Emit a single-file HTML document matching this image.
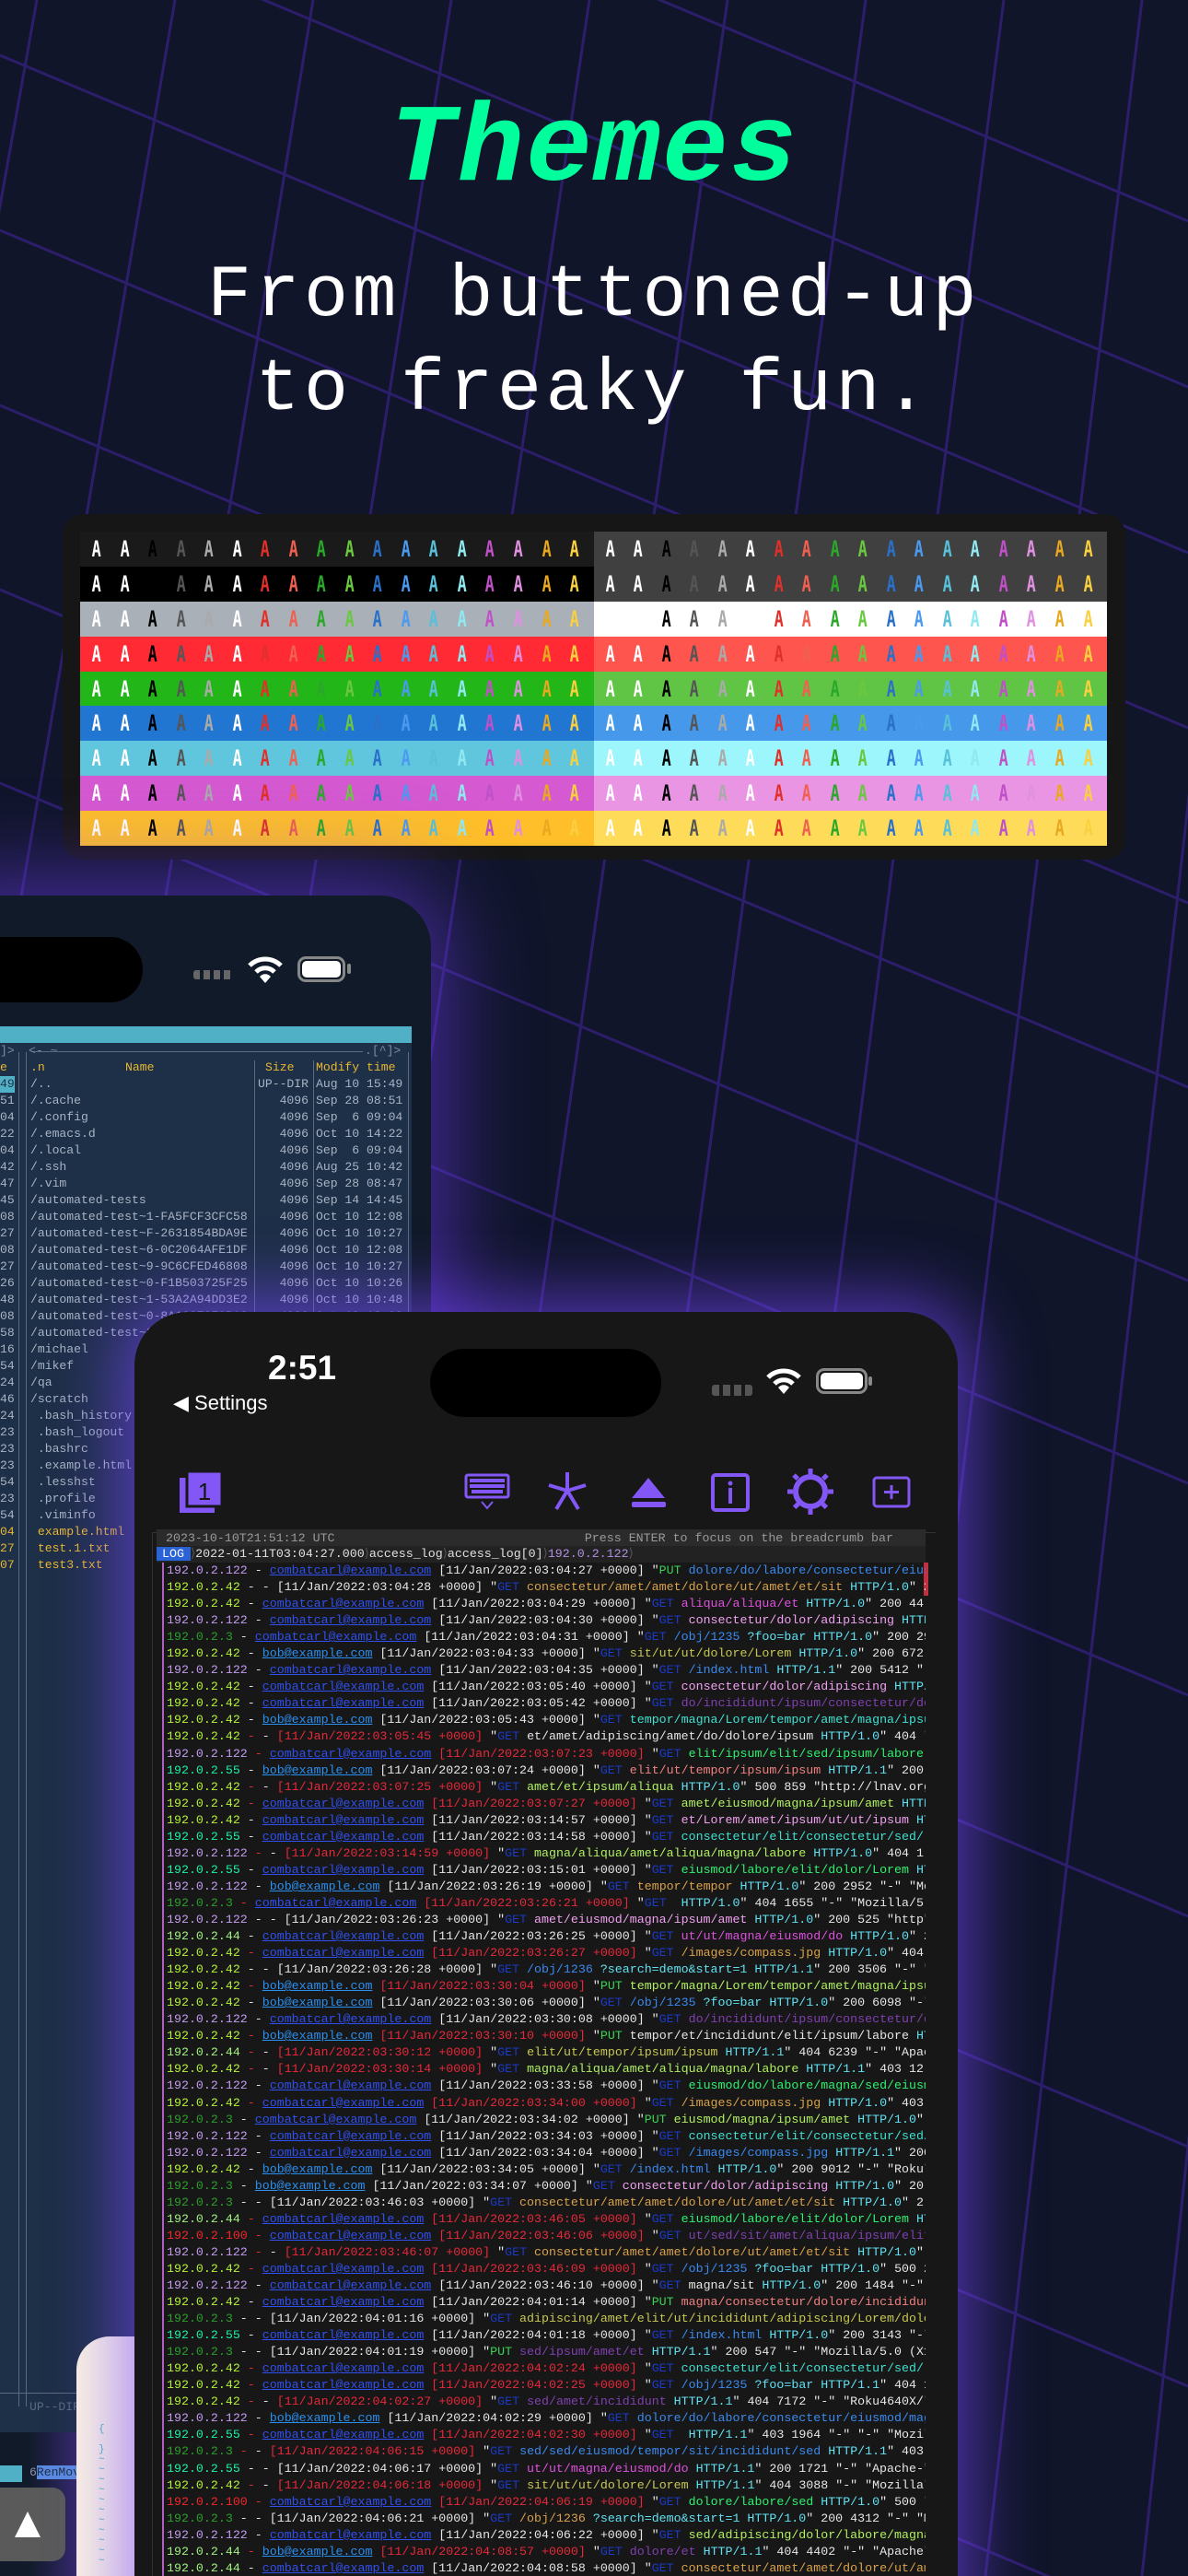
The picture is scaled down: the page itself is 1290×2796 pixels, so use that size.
<!DOCTYPE html>
<html><head><meta charset="utf-8">
<style>
*{margin:0;padding:0;box-sizing:border-box}
html,body{width:1290px;height:2796px;overflow:hidden;background:#10152a}
body{position:relative;font-family:"Liberation Mono",monospace}
#bg{position:absolute;left:0;top:0}
.title{position:absolute;left:0;width:1290px;top:96px;text-align:center;color:#00ff9c;font:italic bold 120px "Liberation Mono",monospace;letter-spacing:2px}
.sub{position:absolute;left:0;width:1290px;text-align:center;color:#fff;font:80px "Liberation Mono",monospace;letter-spacing:4.5px}
.card{position:absolute;left:68px;top:558px;width:1154px;height:375px;background:#161616;border-radius:22px}
.grid{position:absolute;left:87px;top:577px;width:1115px}
.row{height:37.9px;display:flex}
.half{width:557.5px;display:flex;align-items:center;padding-left:8px}
.half span{width:30.9px;display:inline-block;font:bold 24px "DejaVu Sans Mono",monospace;transform:scaleX(.7);text-align:left}
.back{position:absolute;left:-60px;top:972px;width:528px;height:1900px;background:#101a28;border-radius:0 56px 0 0;box-shadow:0 0 90px 20px rgba(110,60,240,.55)}
.mc{position:absolute;left:0;top:1114px;width:447px;height:1526px;background:#1e2f48;overflow:hidden;font:13.1px/18px "Liberation Mono",monospace;color:#a8b4c4;white-space:pre}
.mc .l{position:absolute}
.y{color:#e8b830}
.front{position:absolute;left:146px;top:1424px;width:894px;height:1450px;background:#171717;border-radius:58px 58px 0 0;box-shadow:0 0 70px 18px rgba(120,70,255,.6)}
.log{position:absolute;left:176px;top:1696px;width:829px;height:1100px;overflow:hidden;font:13.3px/18.05px "Liberation Mono",monospace;color:#e6e6e6;white-space:pre;border-left:2px solid #b060c0;padding-left:3px}
.p1{color:#c39bef}.p2{color:#b5f23a}.p3{color:#2c9e2c}.p5{color:#1ef0a0}.p4{color:#a0f080}.p0{color:#f02828}
.e{color:#3050f0;text-decoration:underline}.b{color:#2a90f0;text-decoration:underline}.r{color:#e8283a}.g{color:#1a3ac8}.u{color:#39d353}.h{color:#60e0f0}
.c1{color:#d9a24a}.c2{color:#e050e0}.c3{color:#f0a0f0}.c4{color:#3a8af0}.c5{color:#c8c850}.c6{color:#8040b0}.c7{color:#30f070}.c8{color:#40e0d0}.c9{color:#f08080}.c0{color:#b0f060}
</style></head><body>
<svg id="bg" width="1290" height="2796" viewBox="0 0 1290 2796">
<g stroke="#2c1e6a" stroke-width="3" fill="none">
<line x1="-100" y1="0" x2="-600" y2="2796"/>
<line x1="40" y1="0" x2="-460" y2="2796"/>
<line x1="190" y1="0" x2="-290" y2="2796"/>
<line x1="340" y1="0" x2="-120" y2="2796"/>
<line x1="490" y1="0" x2="50" y2="2796"/>
<line x1="640" y1="0" x2="220" y2="2796"/>
<line x1="790" y1="0" x2="390" y2="2796"/>
<line x1="940" y1="0" x2="560" y2="2796"/>
<line x1="1090" y1="0" x2="730" y2="2796"/>
<line x1="1240" y1="0" x2="900" y2="2796"/>
<line x1="1390" y1="0" x2="1070" y2="2796"/>
<line x1="1540" y1="0" x2="1240" y2="2796"/>
<line x1="1690" y1="0" x2="1410" y2="2796"/>
<line x1="1840" y1="0" x2="1580" y2="2796"/>
<line x1="0" y1="-300" x2="1290" y2="240"/>
<line x1="0" y1="-120" x2="1290" y2="420"/>
<line x1="0" y1="60" x2="1290" y2="600"/>
<line x1="0" y1="250" x2="1290" y2="790"/>
<line x1="0" y1="440" x2="1290" y2="980"/>
<line x1="0" y1="640" x2="1290" y2="1180"/>
<line x1="0" y1="850" x2="1290" y2="1390"/>
<line x1="0" y1="1070" x2="1290" y2="1610"/>
<line x1="0" y1="1300" x2="1290" y2="1840"/>
<line x1="0" y1="1540" x2="1290" y2="2080"/>
<line x1="0" y1="1790" x2="1290" y2="2330"/>
<line x1="0" y1="2050" x2="1290" y2="2590"/>
<line x1="0" y1="2320" x2="1290" y2="2860"/>
</g></svg>

<div class="title">Themes</div>
<div class="sub" style="top:276px">From buttoned-up</div>
<div class="sub" style="top:378px">to freaky fun.</div>

<div class="card"></div>
<div class="grid" id="grid"></div>

<div class="back"></div>
<div style="position:absolute;left:-40px;top:1017px;width:195px;height:71px;background:#000;border-radius:36px"></div>
<div style="position:absolute;left:210px;top:1053px;width:42px;height:10px;background:repeating-linear-gradient(90deg,#666 0 7px,transparent 7px 11px);border-radius:3px"></div>
<svg style="position:absolute;left:268px;top:1036px" width="40" height="32" viewBox="0 0 40 32"><path d="M3 12 A24 24 0 0 1 37 12" stroke="#fff" stroke-width="5" fill="none"/><path d="M10 19 A14 14 0 0 1 30 19" stroke="#fff" stroke-width="5" fill="none"/><path d="M20 31 L14 24 A8 8 0 0 1 26 24 Z" fill="#fff"/></svg>
<div style="position:absolute;left:323px;top:1038px;width:52px;height:28px;border:3px solid #888;border-radius:9px;padding:2px"><div style="width:100%;height:100%;background:#fff;border-radius:5px"></div></div>
<div style="position:absolute;left:377px;top:1046px;width:4px;height:11px;background:#888;border-radius:2px"></div>

<div class="mc" id="mc">
<div style="position:absolute;left:0;top:0;width:447px;height:18px;background:#4fb0c6"></div>
<div style="position:absolute;left:20px;top:28px;width:1px;height:1470px;background:#5a6a80"></div>
<div style="position:absolute;left:28px;top:28px;width:1px;height:1470px;background:#5a6a80"></div>
<div style="position:absolute;left:276px;top:37px;width:1px;height:1460px;background:#5a6a80"></div>
<div style="position:absolute;left:340px;top:37px;width:1px;height:1460px;background:#5a6a80"></div>
<div style="position:absolute;left:443px;top:28px;width:1px;height:1470px;background:#5a6a80"></div>
<div style="position:absolute;left:34px;top:27px;width:360px;height:1px;background:#5a6a80"></div>
<div class="l" style="left:0;top:18px;color:#7a8aa0">]&gt;</div><div class="l" style="left:31px;top:18px;color:#7a8aa0">&lt;- ~</div><div class="l" style="left:396px;top:18px;color:#7a8aa0">.[^]&gt;</div>
<div class="l y" style="left:0;top:36px">e</div>
<div class="l y" style="left:33px;top:36px">.n</div><div class="l y" style="left:136px;top:36px">Name</div><div class="l y" style="left:288px;top:36px">Size</div><div class="l y" style="left:343px;top:36px">Modify time</div>
<div class="l" id="mcrows" style="left:0;top:54px"></div>
<div style="position:absolute;left:0;top:1483px;width:447px;height:1px;background:#5a6a80"></div>
<div class="l" style="left:32px;top:1490px;color:#5a6a80">UP--DIR</div>
</div>
<div style="position:absolute;left:0;top:2640px;width:146px;height:160px;background:linear-gradient(90deg,#101a28 20%,#5a38b0 100%)"></div>
<div style="position:absolute;left:0;top:2676px;width:24px;height:18px;background:#4fb0c6"></div>
<div style="position:absolute;left:32px;top:2675px;font:13.1px/18px 'Liberation Mono',monospace;color:#8a96a8">6<span style="background:#5a8ae0;color:#1e2f48">RenMov</span></div>
<div style="position:absolute;left:-14px;top:2700px;width:85px;height:80px;background:#5a5a5a;border-radius:14px"></div>
<div style="position:absolute;left:16px;top:2726px;width:0;height:0;border-left:14px solid transparent;border-right:14px solid transparent;border-bottom:28px solid #fff"></div>
<div style="position:absolute;left:83px;top:2536px;width:80px;height:270px;background:#fcf5e3;border-radius:36px 0 0 0"></div>
<div style="position:absolute;left:107px;top:2632px;font:11px/11px 'Liberation Mono',monospace;color:#40c0c0;white-space:pre">{

}
~
~
~
~
~
~
~
~
~
~
~</div>

<div class="front"></div>
<div style="position:absolute;left:165px;top:1663px;width:1px;height:1140px;background:#333"></div>
<div style="position:absolute;left:291px;top:1464px;color:#fff;font:bold 37px 'Liberation Sans Narrow','Liberation Sans',sans-serif">2:51</div>
<div style="position:absolute;left:188px;top:1510px;color:#fff;font:22px 'Liberation Sans Narrow','Liberation Sans',sans-serif">&#9664; Settings</div>
<div style="position:absolute;left:467px;top:1464px;width:251px;height:74px;background:#000;border-radius:37px"></div>
<div style="position:absolute;left:773px;top:1503px;width:44px;height:12px;background:repeating-linear-gradient(90deg,#555 0 8px,transparent 8px 12px);border-radius:3px"></div>
<svg style="position:absolute;left:831px;top:1484px" width="40" height="30" viewBox="0 0 40 30"><path d="M3 11 A24 24 0 0 1 37 11" stroke="#fff" stroke-width="5" fill="none"/><path d="M10 18 A14 14 0 0 1 30 18" stroke="#fff" stroke-width="5" fill="none"/><path d="M20 29 L14 22 A8 8 0 0 1 26 22 Z" fill="#fff"/></svg>
<div style="position:absolute;left:886px;top:1485px;width:56px;height:28px;border:3px solid #888;border-radius:9px;padding:2px"><div style="width:100%;height:100%;background:#fff;border-radius:5px"></div></div>
<div style="position:absolute;left:943px;top:1494px;width:4px;height:10px;background:#888;border-radius:2px"></div>

<svg style="position:absolute;left:146px;top:1590px" width="894" height="60" viewBox="146 1590 894 60">
<g fill="#8257f5" stroke="#8257f5">
<rect x="195" y="1604" width="38" height="38" stroke="none"/>
<rect x="203" y="1597" width="38" height="38" stroke="#171717" stroke-width="3"/>
<text x="222" y="1628" font-family="Liberation Sans" font-size="26" fill="#171717" stroke="none" text-anchor="middle">1</text>
<rect x="506" y="1601" width="46" height="24" rx="2" fill="none" stroke-width="3"/>
<g stroke="none"><rect x="510" y="1605" width="38" height="4"/><rect x="510" y="1611" width="38" height="4"/><rect x="512" y="1617" width="34" height="4"/></g>
<path d="M523 1630 L529 1637 L535 1630" fill="none" stroke-width="2"/>
<path d="M616 1598 V1618 M616 1618 L596 1612 M616 1618 L636 1612 M616 1618 L604 1638 M616 1618 L628 1638" fill="none" stroke-width="4"/>
<path d="M704 1604 L722 1626 L686 1626 Z" stroke="none"/><rect x="686" y="1630" width="37" height="6" rx="2" stroke="none"/>
<rect x="774" y="1601" width="38" height="38" rx="3" fill="none" stroke-width="4"/>
<circle cx="793" cy="1610" r="2.5" stroke="none"/><rect x="791" y="1615" width="4" height="17" stroke="none"/>
<circle cx="880" cy="1619" r="16" fill="none" stroke-width="6"/>
<path d="M880 1594V1644M855 1619H905M862 1601L898 1637M898 1601L862 1637" fill="none" stroke-width="5" stroke-dasharray="6 38" />
<rect x="949" y="1604" width="38" height="31" rx="3" fill="none" stroke-width="3"/>
<path d="M968 1612V1627M960 1619.5H976" stroke-width="3"/>
</g></svg>
<div style="position:absolute;left:166px;top:1663px;width:850px;height:1px;background:#333"></div>
<div style="position:absolute;left:170px;top:1660px;width:835px;height:19px;background:#2b2b2b;font:13.3px/19px 'Liberation Mono',monospace;color:#9a9a9a;white-space:pre;padding-left:10px">2023-10-10T21:51:12 UTC                                  Press ENTER to focus on the breadcrumb bar</div>
<div style="position:absolute;left:170px;top:1678px;width:835px;height:18px;background:#222;font:13.3px/18px 'Liberation Mono',monospace;color:#e0e0e0;white-space:pre"><span style="background:#2a62d8;color:#fff;padding:0 7px 0 6px">LOG</span><span style="color:#555">&#10217;</span>2022-01-11T03:04:27.000<span style="color:#555">&#10217;</span>access_log<span style="color:#555">&#10217;</span>access_log[0]<span style="color:#555">&#10217;</span><span style="color:#b090e0">192.0.2.122</span><span style="color:#555">&#10217;</span></div>
<div style="position:absolute;left:1003px;top:1696px;width:5px;height:36px;background:#c03040"></div>
<div class="log" id="log"></div>

<script>
var C=[['#fff','#fff','#000','#555','#aaa','#fff','#e0302a','#f06050','#2aa82a','#6ac840','#2a70c8','#4a9af0','#58c0d8','#90e8f0','#c050c8','#e090e0','#e8a820','#f8d040']];
var rows=[['#1a1a1a','#404040'],['#000','#404040'],['#a9b0b8','#ffffff'],['#ff2a33','#fe554e'],['#22b618','#60c445'],['#2176d2','#4698ea'],['#60c6de','#9cf6fc'],['#d559d0','#e995e3'],['#febf2a','#fedc5a']];
var g='';rows.forEach(function(r){g+='<div class="row">';r.forEach(function(bg){g+='<div class="half" style="background:'+bg+'">';C[0].forEach(function(c){g+='<span style="color:'+c+'">A</span>'});g+='</div>'});g+='</div>'});
document.getElementById('grid').innerHTML=g;
var nums=['49','51','04','22','04','42','47','45','08','27','08','27','26','48','08','58','16','54','24','46','24','23','23','23','54','23','54','04','27','07'];
var names=['/..','/.cache','/.config','/.emacs.d','/.local','/.ssh','/.vim','/automated-tests','/automated-test~1-FA5FCF3CFC58','/automated-test~F-2631854BDA9E','/automated-test~6-0C2064AFE1DF','/automated-test~9-9C6CFED46808','/automated-test~0-F1B503725F25','/automated-test~1-53A2A94DD3E2','/automated-test~0-8A1C2E9F0B12','/automated-test~2-44E1A7B2C9D0','/michael','/mikef','/qa','/scratch',' .bash_history',' .bash_logout',' .bashrc',' .example.html',' .lesshst',' .profile',' .viminfo',' example.html',' test.1.txt',' test3.txt'];
var sz=['UP--DIR','   4096','   4096','   4096','   4096','   4096','   4096','   4096','   4096','   4096','   4096','   4096','   4096','   4096','   4096','   4096'];
var tm=['Aug 10 15:49','Sep 28 08:51','Sep  6 09:04','Oct 10 14:22','Sep  6 09:04','Aug 25 10:42','Sep 28 08:47','Sep 14 14:45','Oct 10 12:08','Oct 10 10:27','Oct 10 12:08','Oct 10 10:27','Oct 10 10:26','Oct 10 10:48','Oct 10 12:08','Oct 10 10:58'];
var m='';for(var i=0;i<30;i++){var y=i*18;var yc=i>=27?' y':'';
m+='<div class="l'+yc+'" style="left:0;top:'+y+'px'+(i==0?';background:#4fb0c6;color:#1e2f48':'')+'">'+nums[i]+'</div>';
m+='<div class="l'+yc+'" style="left:33px;top:'+y+'px">'+names[i]+'</div>';
if(i<16){m+='<div class="l" style="left:280px;top:'+y+'px">'+sz[i]+'</div><div class="l" style="left:343px;top:'+y+'px">'+tm[i]+'</div>';}}
document.getElementById('mcrows').innerHTML=m;
var ips={'122':'p1','42':'p2','3':'p3','55':'p5','44':'p4','100':'p0'};
var L=[
['122','e',0,'03:04:27','u','c4','dolore/do/labore/consectetur/eiusmod','HTTP/1.0','200 2952'],
['42','-',0,'03:04:28','g','c1','consectetur/amet/amet/dolore/ut/amet/et/sit','HTTP/1.0','200 44'],
['42','e',0,'03:04:29','g','c2','aliqua/aliqua/et','HTTP/1.0','200 44'],
['122','e',0,'03:04:30','g','c3','consectetur/dolor/adipiscing','HTTP/1.0','200 4'],
['3','e',0,'03:04:31','g','c4','/obj/1235','?foo=bar HTTP/1.0','200 29'],
['42','b',0,'03:04:33','g','c5','sit/ut/ut/dolore/Lorem','HTTP/1.0','200 672'],
['122','e',0,'03:04:35','g','c4','/index.html','HTTP/1.1','200 5412'],
['42','e',0,'03:05:40','g','c3','consectetur/dolor/adipiscing','HTTP/1.0','200'],
['42','e',0,'03:05:42','g','c6','do/incididunt/ipsum/consectetur/dolor','HTTP/1.0','200'],
['42','b',0,'03:05:43','g','c8','tempor/magna/Lorem/tempor/amet/magna/ipsum','HTTP/1.0','200'],
['42','-',1,'03:05:45','g','w','et/amet/adipiscing/amet/do/dolore/ipsum','HTTP/1.0','404'],
['122','e',1,'03:07:23','g','c7','elit/ipsum/elit/sed/ipsum/labore','HTTP/1.0','200'],
['55','b',0,'03:07:24','g','c9','elit/ut/tempor/ipsum/ipsum','HTTP/1.1','200 1655'],
['42','-',1,'03:07:25','g','c0','amet/et/ipsum/aliqua','HTTP/1.0','500 859 "http://lnav.org"'],
['42','e',1,'03:07:27','g','c0','amet/eiusmod/magna/ipsum/amet','HTTP/1.0','200'],
['42','e',0,'03:14:57','g','c3','et/Lorem/amet/ipsum/ut/ut/ipsum','HTTP/1.0','200'],
['55','e',0,'03:14:58','g','c8','consectetur/elit/consectetur/sed/','HTTP/1.0','200'],
['122','-',1,'03:14:59','g','c0','magna/aliqua/amet/aliqua/magna/labore','HTTP/1.0','404 1'],
['55','e',0,'03:15:01','g','c7','eiusmod/labore/elit/dolor/Lorem','HTTP/1.0','200'],
['122','b',0,'03:26:19','g','c1','tempor/tempor','HTTP/1.0','200 2952 "-" "Mozilla"'],
['3','e',1,'03:26:21','g','c9','','HTTP/1.0','404 1655'],
['122','-',0,'03:26:23','g','c3','amet/eiusmod/magna/ipsum/amet','HTTP/1.0','200 525 "http"'],
['44','e',0,'03:26:25','g','c2','ut/ut/magna/eiusmod/do','HTTP/1.0','200'],
['42','e',1,'03:26:27','g','c1','/images/compass.jpg','HTTP/1.0','404'],
['42','-',0,'03:26:28','g','c4','/obj/1236','?search=demo&start=1 HTTP/1.1','200 3506 "-"'],
['42','b',1,'03:30:04','u','c0','tempor/magna/Lorem/tempor/amet/magna/ipsum','HTTP/1.0','200'],
['42','b',0,'03:30:06','g','c4','/obj/1235','?foo=bar HTTP/1.0','200 6098 "-"'],
['122','e',0,'03:30:08','g','c6','do/incididunt/ipsum/consectetur/dolor','HTTP/1.0','200'],
['42','b',1,'03:30:10','u','w','tempor/et/incididunt/elit/ipsum/labore','HTTP/1.0','200'],
['44','-',1,'03:30:12','g','c5','elit/ut/tempor/ipsum/ipsum','HTTP/1.1','404 6239 "-" "Apache"'],
['42','-',1,'03:30:14','g','c0','magna/aliqua/amet/aliqua/magna/labore','HTTP/1.1','403 12'],
['122','e',0,'03:33:58','g','c7','eiusmod/do/labore/magna/sed/eiusmod','HTTP/1.0','200'],
['42','e',1,'03:34:00','g','c1','/images/compass.jpg','HTTP/1.0','403'],
['3','e',0,'03:34:02','u','c0','eiusmod/magna/ipsum/amet','HTTP/1.0','200'],
['122','e',0,'03:34:03','g','c8','consectetur/elit/consectetur/sed/','HTTP/1.0','200'],
['122','e',0,'03:34:04','g','c4','/images/compass.jpg','HTTP/1.1','200 2198 "-" "Roku4640X/"'],
['42','b',0,'03:34:05','g','c4','/index.html','HTTP/1.0','200 9012 "-" "Roku"'],
['3','b',0,'03:34:07','g','c3','consectetur/dolor/adipiscing','HTTP/1.0','20'],
['3','-',0,'03:46:03','g','c1','consectetur/amet/amet/dolore/ut/amet/et/sit','HTTP/1.0','2'],
['44','e',1,'03:46:05','g','c7','eiusmod/labore/elit/dolor/Lorem','HTTP/1.0','200'],
['100','e',1,'03:46:06','g','c6','ut/sed/sit/amet/aliqua/ipsum/elit','HTTP/1.0','200'],
['122','-',1,'03:46:07','g','c1','consectetur/amet/amet/dolore/ut/amet/et/sit','HTTP/1.0','200'],
['42','e',1,'03:46:09','g','c4','/obj/1235','?foo=bar HTTP/1.0','500 2'],
['122','e',0,'03:46:10','g','w','magna/sit','HTTP/1.0','200 1484 "-"'],
['42','e',0,'04:01:14','u','c9','magna/consectetur/dolore/incididunt','HTTP/1.0','200'],
['3','-',0,'04:01:16','g','c5','adipiscing/amet/elit/ut/incididunt/adipiscing/Lorem/dolor','HTTP/1.0','200'],
['55','e',0,'04:01:18','g','c4','/index.html','HTTP/1.0','200 3143 "-"'],
['3','-',0,'04:01:19','u','c6','sed/ipsum/amet/et','HTTP/1.1','200 547 "-" "Mozilla/5.0 (X11)"'],
['42','e',1,'04:02:24','g','c8','consectetur/elit/consectetur/sed/','HTTP/1.0','200'],
['42','e',1,'04:02:25','g','c4','/obj/1235','?foo=bar HTTP/1.1','404 1'],
['42','-',1,'04:02:27','g','c6','sed/amet/incididunt','HTTP/1.1','404 7172 "-" "Roku4640X/"'],
['122','b',0,'04:02:29','g','c4','dolore/do/labore/consectetur/eiusmod/magna','HTTP/1.0','200'],
['55','e',1,'04:02:30','g','c6','','HTTP/1.1','403 1964 "-"'],
['3','-',1,'04:06:15','g','c4','sed/sed/eiusmod/tempor/sit/incididunt/sed','HTTP/1.1','403'],
['55','-',0,'04:06:17','g','c2','ut/ut/magna/eiusmod/do','HTTP/1.1','200 1721 "-" "Apache-"'],
['42','-',1,'04:06:18','g','c5','sit/ut/ut/dolore/Lorem','HTTP/1.1','404 3088 "-" "Mozilla"'],
['100','e',1,'04:06:19','g','c7','dolore/labore/sed','HTTP/1.0','500'],
['3','-',0,'04:06:21','g','c1','/obj/1236','?search=demo&start=1 HTTP/1.0','200 4312 "-" "M"'],
['122','e',0,'04:06:22','g','c0','sed/adipiscing/dolor/labore/magna','HTTP/1.0','200'],
['44','b',1,'04:08:57','g','c6','dolore/et','HTTP/1.1','404 4402 "-" "Apache"'],
['44','e',0,'04:08:58','g','c1','consectetur/amet/amet/dolore/ut/amet','HTTP/1.0','200']
];
var o='';L.forEach(function(l){
var ip='192.0.2.'+l[0];var dash=l[2]?'<span class="r"> - </span>':' - ';
var who=l[1]=='-'?'- ':(l[1]=='e'?'<span class="e">combatcarl@example.com</span> ':'<span class="b">bob@example.com</span> ');
var dt='[11/Jan/2022:'+l[3]+' +0000]';dt=l[2]?'<span class="r">'+dt+'</span>':dt;
var meth=l[4]=='u'?'<span class="u">PUT</span>':'<span class="g">GET</span>';
o+='<span class="'+ips[l[0]]+'">'+ip+'</span>'+dash+who+dt+' "'+meth+' <span class="'+l[5]+'">'+l[6]+'</span> <span class="h">'+l[7]+'</span>" '+l[8]+' "-" "Mozilla/5.0"\n';});
document.getElementById('log').innerHTML=o;
</script>
</body></html>
